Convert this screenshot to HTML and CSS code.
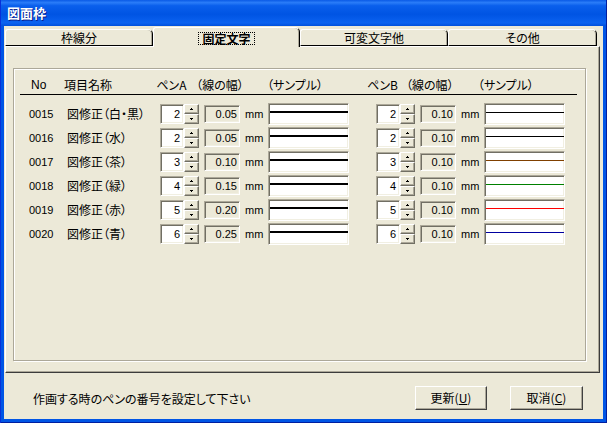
FILE: index.html
```html
<!DOCTYPE html>
<html lang="ja">
<head>
<meta charset="utf-8">
<title>図面枠</title>
<link rel="stylesheet" href="styles.css">
</head>
<body>
<div class="window">
  <div class="titlebar"><span class="title">図面枠</span></div>
  <div class="frame">
    <div class="client">
      <div class="tabs">
        <div class="tab w148">枠線分</div>
        <div class="tab active w147"><span class="focus">固定文字</span></div>
        <div class="tab w148">可変文字他</div>
        <div class="tab w149">その他</div>
      </div>
      <div class="panel">
        <div class="group">
          <div class="head">
            <span class="h-no num">No</span>
            <span class="h-name">項目名称</span>
            <span class="h-pen">ペンA</span>
            <span class="h-width">（線の幅）</span>
            <span class="h-sample">（サンプル）</span>
            <span class="h-pen h-penb">ペンB</span>
            <span class="h-width h-widthb">（線の幅）</span>
            <span class="h-sample">（サンプル）</span>
          </div>
          <div class="rows">
            <div class="row">
              <span class="no num">0015</span>
              <span class="name">図修正（白・黒）</span>
              <div class="pen">
                <span class="edit sunken num">2</span>
                <span class="spin"><i class="up"></i><i class="down"></i></span>
                <span class="ro sunken num">0.05</span>
                <span class="mm num">mm</span>
                <span class="sample sunken"><i class="line la c-black"></i></span>
              </div>
              <div class="pen">
                <span class="edit sunken num">2</span>
                <span class="spin"><i class="up"></i><i class="down"></i></span>
                <span class="ro sunken num">0.10</span>
                <span class="mm num">mm</span>
                <span class="sample sunken"><i class="line lb c-black"></i></span>
              </div>
            </div>
            <div class="row">
              <span class="no num">0016</span>
              <span class="name">図修正（水）</span>
              <div class="pen">
                <span class="edit sunken num">2</span>
                <span class="spin"><i class="up"></i><i class="down"></i></span>
                <span class="ro sunken num">0.05</span>
                <span class="mm num">mm</span>
                <span class="sample sunken"><i class="line la c-black"></i></span>
              </div>
              <div class="pen">
                <span class="edit sunken num">2</span>
                <span class="spin"><i class="up"></i><i class="down"></i></span>
                <span class="ro sunken num">0.10</span>
                <span class="mm num">mm</span>
                <span class="sample sunken"><i class="line lb c-black"></i></span>
              </div>
            </div>
            <div class="row">
              <span class="no num">0017</span>
              <span class="name">図修正（茶）</span>
              <div class="pen">
                <span class="edit sunken num">3</span>
                <span class="spin"><i class="up"></i><i class="down"></i></span>
                <span class="ro sunken num">0.10</span>
                <span class="mm num">mm</span>
                <span class="sample sunken"><i class="line la c-black"></i></span>
              </div>
              <div class="pen">
                <span class="edit sunken num">3</span>
                <span class="spin"><i class="up"></i><i class="down"></i></span>
                <span class="ro sunken num">0.10</span>
                <span class="mm num">mm</span>
                <span class="sample sunken"><i class="line lb c-brown"></i></span>
              </div>
            </div>
            <div class="row">
              <span class="no num">0018</span>
              <span class="name">図修正（緑）</span>
              <div class="pen">
                <span class="edit sunken num">4</span>
                <span class="spin"><i class="up"></i><i class="down"></i></span>
                <span class="ro sunken num">0.15</span>
                <span class="mm num">mm</span>
                <span class="sample sunken"><i class="line la c-black"></i></span>
              </div>
              <div class="pen">
                <span class="edit sunken num">4</span>
                <span class="spin"><i class="up"></i><i class="down"></i></span>
                <span class="ro sunken num">0.10</span>
                <span class="mm num">mm</span>
                <span class="sample sunken"><i class="line lb c-green"></i></span>
              </div>
            </div>
            <div class="row">
              <span class="no num">0019</span>
              <span class="name">図修正（赤）</span>
              <div class="pen">
                <span class="edit sunken num">5</span>
                <span class="spin"><i class="up"></i><i class="down"></i></span>
                <span class="ro sunken num">0.20</span>
                <span class="mm num">mm</span>
                <span class="sample sunken"><i class="line la c-black"></i></span>
              </div>
              <div class="pen">
                <span class="edit sunken num">5</span>
                <span class="spin"><i class="up"></i><i class="down"></i></span>
                <span class="ro sunken num">0.10</span>
                <span class="mm num">mm</span>
                <span class="sample sunken"><i class="line lb c-red"></i></span>
              </div>
            </div>
            <div class="row">
              <span class="no num">0020</span>
              <span class="name">図修正（青）</span>
              <div class="pen">
                <span class="edit sunken num">6</span>
                <span class="spin"><i class="up"></i><i class="down"></i></span>
                <span class="ro sunken num">0.25</span>
                <span class="mm num">mm</span>
                <span class="sample sunken"><i class="line la c-black"></i></span>
              </div>
              <div class="pen">
                <span class="edit sunken num">6</span>
                <span class="spin"><i class="up"></i><i class="down"></i></span>
                <span class="ro sunken num">0.10</span>
                <span class="mm num">mm</span>
                <span class="sample sunken"><i class="line lb c-blue"></i></span>
              </div>
            </div>
          </div>
        </div>
      </div>
      <div class="footer">
        <span class="status">作画する時のペンの番号を設定して下さい</span>
        <button class="btn btn-ok">更新(<u>U</u>)</button>
        <button class="btn btn-cancel">取消(<u>C</u>)</button>
      </div>
    </div>
  </div>
</div>
</body>
</html>
```

FILE: styles.css
```css
* { box-sizing: border-box; margin: 0; padding: 0; }

html, body {
  width: 607px;
  height: 423px;
  overflow: hidden;
}

body {
  background: #0054e3;
  font-family: "Noto Sans CJK JP", "Liberation Sans", sans-serif;
  font-size: 12px;
  color: #000;
  font-feature-settings: "palt" 1;
}

.window {
  width: 607px;
  height: 423px;
  display: flex;
  flex-direction: column;
}

.titlebar {
  height: 26px;
  flex: none;
  display: flex;
  align-items: center;
  padding-left: 7px;
  background: linear-gradient(180deg, #0a5ae6 0%, #2a7cf8 10%, #0a5fec 22%, #0054e3 55%, #0b62f0 88%, #0050dc 100%);
  box-shadow: inset 1px 0 0 #0831d9, inset -1px 0 0 #001ea0;
}

.title {
  color: #fff;
  font-weight: bold;
  font-size: 13px;
  line-height: 16px;
  text-shadow: 1px 1px 0 #0a1e8a;
}

.frame {
  flex: 1;
  padding: 0 4px 4px 4px;
  background: #0055e5;
  box-shadow: inset 1px 0 0 #0831d9, inset -1px 0 0 #001ea0, inset 0 -1px 0 #001ea0;
}

.client {
  height: 393px;
  background: #ece9d8;
  display: flex;
  flex-direction: column;
}

/* tabs */
.tabs {
  height: 20px;
  flex: none;
  display: flex;
  align-items: flex-end;
  padding-left: 1px;
}

.tab {
  height: 17px;
  background: #ece9d8;
  border: 1px solid;
  border-color: #fff #000 #000 #fff;
  border-radius: 3px 5px 0 0;
  box-shadow: inset -1px 0 0 #aca899;
  display: flex;
  align-items: center;
  justify-content: center;
  line-height: 14px;
}

.w147 { width: 147px; }
.w148 { width: 148px; }
.w149 { width: 149px; }

.tab.active {
  height: 20px;
  margin-bottom: -1px;
  border-bottom: 0;
  position: relative;
  z-index: 1;
  font-weight: bold;
  padding-top: 1px;
}

.focus {
  display: inline-block;
  border: 1px dotted #000;
  padding: 0 3px;
  line-height: 11px;
}

/* panel */
.panel {
  height: 327px;
  width: 595px;
  margin-left: 1px;
  flex: none;
  border: 1px solid;
  border-color: #fff #3c3c3c #3c3c3c #fff;
  box-shadow: inset -1px -1px 0 #aca899;
  padding: 21px 0 0 7px;
}

.group {
  width: 573px;
  height: 293px;
  border: 1px solid #aca899;
  box-shadow: inset 1px 1px 0 #fff, 1px 1px 0 #fff;
  padding: 7px 0 0 6px;
}

.num {
  font-family: "Liberation Sans", "Noto Sans CJK JP", sans-serif;
  font-size: 11px;
}

.head {
  width: 557px;
  height: 19px;
  border-bottom: 1px solid #000;
  display: flex;
  line-height: 18px;
  white-space: nowrap;
}

.h-no { width: 45px; padding-left: 11px; font-size: 12px; }
.h-name { width: 95px; }
.h-pen { width: 41px; }
.h-width { width: 73px; }
.h-sample { width: 102px; }
.h-penb { width: 40px; margin-left: 1px; }
.h-widthb { width: 74px; }

.rows {
  margin-top: 8px;
  display: flex;
  flex-direction: column;
}

.row {
  height: 24px;
  display: flex;
  align-items: flex-start;
  white-space: nowrap;
}

.no {
  width: 47px;
  padding-left: 9px;
  line-height: 22px;
}

.name {
  width: 93px;
  line-height: 22px;
}

.pen {
  display: flex;
  align-items: flex-start;
}

.pen + .pen { margin-left: 27px; }

.sunken {
  border: 1px solid;
  border-color: #aca899 #fff #fff #aca899;
  box-shadow: inset 1px 1px 0 #716f64, inset -1px -1px 0 #f1efe2;
}

.edit {
  width: 24px;
  height: 20px;
  margin-top: 1px;
  background: #fff;
  text-align: right;
  padding-right: 3px;
  line-height: 18px;
}

.spin {
  width: 15px;
  height: 20px;
  margin-top: 1px;
  display: flex;
  flex-direction: column;
}

.spin i {
  flex: 1;
  display: flex;
  align-items: center;
  justify-content: center;
  background: #ece9d8;
  border: 1px solid;
  border-color: #fff #716f64 #716f64 #fff;
  box-shadow: inset -1px -1px 0 #aca899;
}

.spin i::after {
  content: "";
  width: 1px;
  height: 1px;
  background: #000;
}

.spin .up::after {
  box-shadow: -1px 1px 0 #000, 0 1px 0 #000, 1px 1px 0 #000;
  margin-top: -1px;
}

.spin .down::after {
  box-shadow: -1px -1px 0 #000, 0 -1px 0 #000, 1px -1px 0 #000;
  margin-top: 1px;
}

.ro {
  width: 36px;
  height: 18px;
  margin-top: 2px;
  margin-left: 5px;
  background: #ece9d8;
  text-align: right;
  padding-right: 2px;
  line-height: 16px;
}

.mm {
  width: 28px;
  padding-left: 5px;
  line-height: 22px;
}

.sample {
  width: 81px;
  height: 22px;
  background: #fff;
  display: block;
}

.line {
  display: block;
  margin: 7px 0 0 1px;
}

.la { height: 2px; }
.lb { height: 1px; margin-top: 8px; }

.c-black { background: #000; }
.c-brown { background: #804000; }
.c-green { background: #008000; }
.c-red { background: #ff0000; }
.c-blue { background: #0000a0; }

/* footer */
.footer {
  flex: 1;
  display: flex;
  align-items: center;
  padding: 4px 20px 0 29px;
}

.status {
  flex: 1;
  white-space: nowrap;
}

.btn {
  height: 24px;
  width: 72px;
  background: #ece9d8;
  border: 1px solid;
  border-color: #fff #404040 #404040 #fff;
  box-shadow: inset -1px -1px 0 #aca899;
  font-family: "Noto Sans CJK JP", "Liberation Sans", sans-serif;
  font-size: 12px;
  font-feature-settings: "palt" 1;
  color: #000;
  line-height: 20px;
}

.btn-cancel {
  width: 73px;
  margin-left: 23px;
}
```
